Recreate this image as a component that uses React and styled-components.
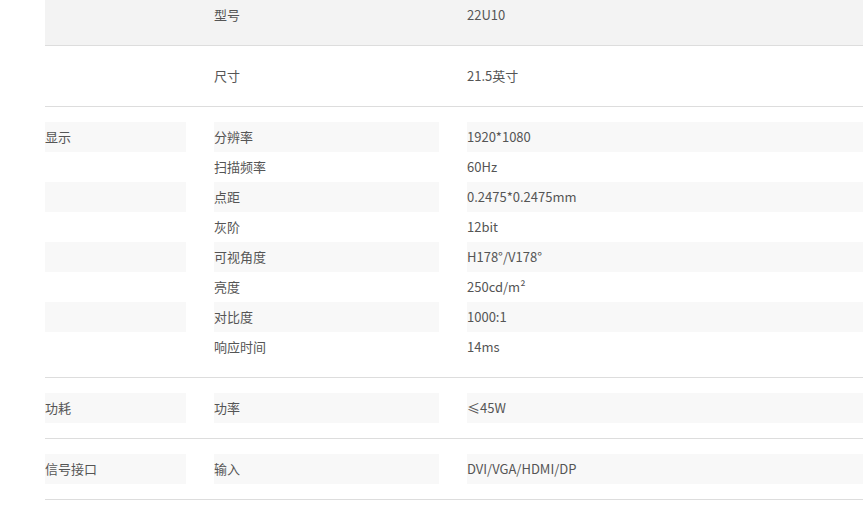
import React from "react";
import styled, { createGlobalStyle } from "styled-components";

const Global = createGlobalStyle`
  body { margin: 0; background: #fff; font-family: "Noto Sans CJK SC", "Noto Sans", sans-serif; }
`;

const Page = styled.div`
  padding-left: 45px;
  overflow: hidden;
`;

const Section = styled.div`
  padding: ${(p) => (p.$top ? "0 0 15px" : "15px 0")};
  background: ${(p) => (p.$top ? "#f3f3f3" : "#fff")};
  border-bottom: 1px solid #dddddd;
  display: grid;
  grid-template-columns: 141px 1fr;
  column-gap: 28px;
`;

const Group = styled.div`
  display: flex;
  flex-direction: column;
`;

const GroupCell = styled.div`
  height: 30px;
  line-height: 30px;
  font-size: 13px;
  color: #555;
  background: ${(p) => (p.$striped ? "#f8f8f8" : "transparent")};
`;

const Rows = styled.div`
  display: flex;
  flex-direction: column;
`;

const Row = styled.div`
  display: grid;
  grid-template-columns: 225px 1fr;
  column-gap: 28px;
  height: 30px;
`;

const Cell = styled.div`
  line-height: 30px;
  font-size: 13px;
  color: #555;
  background: ${(p) => (p.$striped ? "#f8f8f8" : "transparent")};
`;

const sections = [
  { top: true, group: "", rows: [["型号", "22U10"]] },
  { group: "", rows: [["尺寸", "21.5英寸"]] },
  {
    group: "显示",
    striped: true,
    rows: [
      ["分辨率", "1920*1080"],
      ["扫描频率", "60Hz"],
      ["点距", "0.2475*0.2475mm"],
      ["灰阶", "12bit"],
      ["可视角度", "H178°/V178°"],
      ["亮度", "250cd/m²"],
      ["对比度", "1000:1"],
      ["响应时间", "14ms"],
    ],
  },
  { group: "功耗", striped: true, rows: [["功率", "≤45W"]] },
  { group: "信号接口", striped: true, rows: [["输入", "DVI/VGA/HDMI/DP"]] },
];

export default function App() {
  return (
    <>
      <Global />
      <Page>
        {sections.map((s, i) => (
          <Section key={i} $top={s.top}>
            <Group>
              {s.rows.map((r, j) => (
                <GroupCell key={j} $striped={s.striped && j % 2 === 0}>
                  {j === 0 ? s.group : ""}
                </GroupCell>
              ))}
            </Group>
            <Rows>
              {s.rows.map((r, j) => {
                const st = s.striped && j % 2 === 0;
                return (
                  <Row key={j}>
                    <Cell $striped={st}>{r[0]}</Cell>
                    <Cell $striped={st}>{r[1]}</Cell>
                  </Row>
                );
              })}
            </Rows>
          </Section>
        ))}
      </Page>
    </>
  );
}
